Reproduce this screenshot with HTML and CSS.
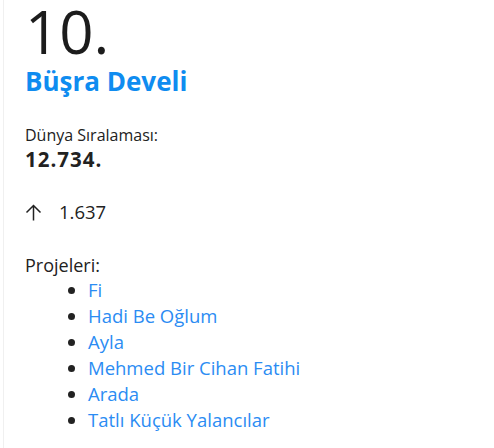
FILE: index.html
```html
<!DOCTYPE html>
<html lang="tr">
<head>
<meta charset="utf-8">
<link rel="stylesheet" href="styles.css">
</head>
<body>
<div class="card">
  <div class="rank">10.</div>
  <div class="name">Büşra Develi</div>
  <div class="label">Dünya Sıralaması:</div>
  <div class="world">12.734.</div>
  <div class="change">
    <svg class="arrow" width="17" height="17" viewBox="0 0 17 17"><path d="M8.5 16.5V1.5M1.5 8.5l7-7 7 7" fill="none" stroke="#222" stroke-width="1.5"/></svg>
    <span>1.637</span>
  </div>
  <div class="projects-label">Projeleri:</div>
  <ul class="projects">
    <li><a href="#">Fi</a></li>
    <li><a href="#">Hadi Be Oğlum</a></li>
    <li><a href="#">Ayla</a></li>
    <li><a href="#">Mehmed Bir Cihan Fatihi</a></li>
    <li><a href="#">Arada</a></li>
    <li><a href="#">Tatlı Küçük Yalancılar</a></li>
  </ul>
</div>
</body>
</html>
```
FILE: styles.css
```css
html, body {
  margin: 0;
  background: #fff;
}
body {
  font-family: "Open Sans", "Lato", sans-serif;
  color: #222;
}
.card {
  margin-left: 3px;
  border-left: 1px solid #f0f0f0;
  padding-left: 21px;
  min-height: 448px;
  box-sizing: border-box;
  overflow: hidden;
}
.rank {
  font-size: 60px;
  font-weight: 400;
  line-height: 62px;
  color: #1c1c1c;
}
.name {
  margin-top: 2px;
  font-size: 26px;
  font-weight: 700;
  color: #0f8cf0;
  line-height: 34px;
}
.label {
  margin-top: 27px;
  font-size: 16px;
  line-height: 20px;
}
.world {
  margin-top: 2px;
  font-size: 20.5px;
  font-weight: 700;
  letter-spacing: 1px;
  line-height: 24px;
}
.change {
  margin-top: 29px;
  display: flex;
  align-items: center;
  gap: 17px;
  font-size: 18.5px;
  line-height: 24px;
}
.projects-label {
  margin-top: 29px;
  font-size: 18px;
  line-height: 24px;
}
.projects {
  margin: 0;
  padding-left: 63px;
  font-size: 18.5px;
  line-height: 26px;
}
.projects a {
  color: #2b8cf3;
  text-decoration: none;
}
```
